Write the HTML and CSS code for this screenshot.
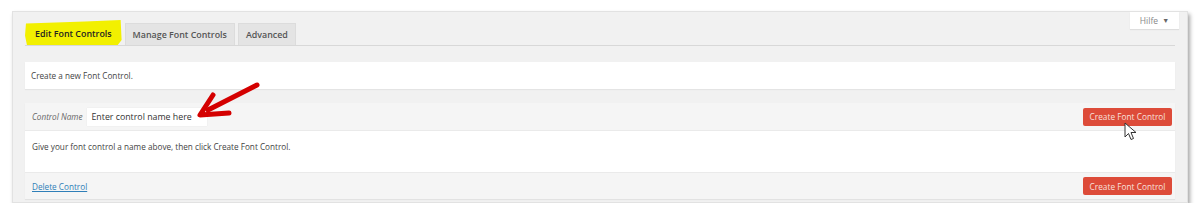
FILE: index.html
```html
<!DOCTYPE html>
<html>
<head>
    <meta charset="UTF-8">
    <link rel="stylesheet" href="styles.css">
</head>
<body>
    <div class="frame">
        <div class="help-bar">
            <button class="help-btn">Hilfe <span class="caret">&#9660;</span></button>
        </div>
        <div class="tabs">
            <a class="tab active">Edit Font Controls</a>
            <a class="tab">Manage Font Controls</a>
            <a class="tab">Advanced</a>
        </div>

        <div class="notice">Create a new Font Control.</div>

        <div class="panel">
            <div class="panel-head">
                <label for="controlname">Control Name</label>
                <input type="text" id="controlname" value="Enter control name here">
                <button class="btn-red">Create Font Control</button>
            </div>
            <div class="panel-body">
                Give your font control a name above, then click Create Font Control.
            </div>
            <div class="panel-foot">
                <a class="delete-link" href="#">Delete Control</a>
                <button class="btn-red">Create Font Control</button>
            </div>
        </div>

        <!-- annotation arrow -->
        <svg class="arrow" width="80" height="50" viewBox="0 0 80 50">
            <path d="M73 15 L24 40" stroke="#d40000" stroke-width="5" stroke-linecap="round" fill="none"/>
            <path d="M29 25 L16 45 L45 43" stroke="#d40000" stroke-width="5" stroke-linecap="round" stroke-linejoin="round" fill="none"/>
        </svg>

        <!-- mouse pointer -->
        <svg class="cursor" width="14" height="20" viewBox="0 0 14 20">
            <path d="M1 1 L1 15 L4.5 11.5 L7 17.5 L9.5 16.5 L7 10.5 L12 10.5 Z" fill="#fff" stroke="#333" stroke-width="1"/>
        </svg>
    </div>
</body>
</html>
```

FILE: styles.css
```css
* {
    box-sizing: border-box;
}

body {
    margin: 0;
    background: #fff;
    font-family: "Open Sans", "Noto Sans", Arial, sans-serif;
    font-size: 8.2px;
    color: #444;
}

.frame {
    position: relative;
    margin: 11px 0 0 12px;
    width: 1176px;
    height: 192px;
    background: #f1f1f1;
    border: 1px solid #e2e2e2;
    box-shadow: 2px 3px 4px rgba(0, 0, 0, 0.35);
    padding: 0 12px 0 12px;
}

.help-bar {
    display: flex;
    justify-content: flex-end;
    height: 0;
}

.help-btn {
    height: 17px;
    width: 49px;
    margin-right: -4px;
    background: #fff;
    border: none;
    box-shadow: 0 1px 1px rgba(0, 0, 0, 0.08);
    font-family: inherit;
    font-size: 8.5px;
    color: #888;
    padding: 0;
}

.caret {
    font-size: 7px;
    margin-left: 2px;
    vertical-align: 1px;
    color: #666;
}

.tabs {
    display: flex;
    gap: 3px;
    padding-top: 12px;
    border-bottom: 1px solid #d8d8d8;
    height: 34px;
    align-items: flex-end;
}

.tab {
    display: block;
    height: 22px;
    line-height: 22px;
    padding: 0 7px;
    background: #e4e4e4;
    font-size: 8.9px;
    font-weight: 600;
    color: #555;
    border: 1px solid #dcdcdc;
    border-bottom: none;
}

.tab.active {
    background: #f2f000;
    border: none;
    color: #222;
    padding: 0 10px 0 10px;
    height: 25px;
    line-height: 27px;
    clip-path: polygon(1% 14%, 62% 6%, 99% 0%, 100% 80%, 96% 100%, 2% 100%, 0% 62%);
}

.notice {
    margin-top: 16px;
    background: #fff;
    height: 27px;
    line-height: 27px;
    padding-left: 6px;
    box-shadow: 0 1px 1px rgba(0, 0, 0, 0.05);
}

.panel {
    margin-top: 14px;
    background: #fff;
    box-shadow: 0 1px 1px rgba(0, 0, 0, 0.06);
}

.panel-head,
.panel-foot {
    display: flex;
    align-items: center;
    background: #f5f5f5;
    padding: 0 3px 0 7px;
}

.panel-head {
    height: 28px;
    border-bottom: 1px solid #eaeaea;
}

.panel-head label {
    font-style: italic;
    color: #666;
    margin-right: 5px;
}

.panel-head input {
    width: 120px;
    height: 18px;
    border: none;
    background: #fff;
    font-family: inherit;
    font-size: 8.8px;
    color: #333;
    padding: 0 4px;
    box-shadow: 0 0 1px rgba(0, 0, 0, 0.1);
}

.btn-red {
    margin-left: auto;
    width: 89px;
    height: 18px;
    border: none;
    border-radius: 2px;
    background: #dd4b39;
    color: #f7e0dc;
    font-family: inherit;
    font-size: 8.3px;
    padding: 0;
}

.panel-body {
    height: 41px;
    padding: 10px 7px 0;
}

.panel-foot {
    height: 27px;
    border-top: 1px solid #eaeaea;
}

.delete-link {
    color: #2f7fb8;
    text-decoration: underline;
}

.arrow {
    position: absolute;
    left: 171px;
    top: 58px;
}

.cursor {
    position: absolute;
    left: 1111px;
    top: 110px;
}
```
